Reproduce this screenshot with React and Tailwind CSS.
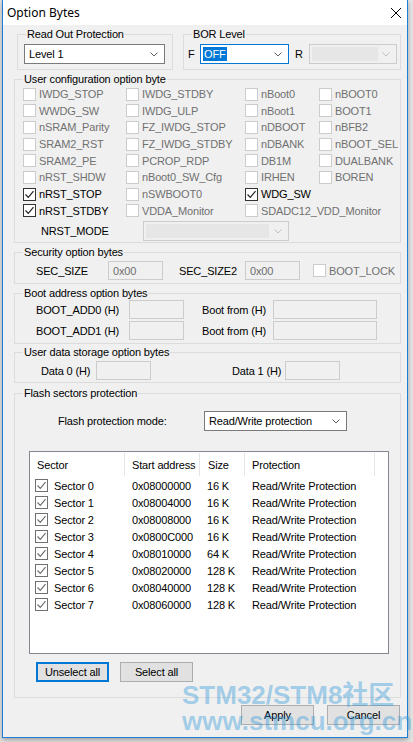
import React from 'react';

const font = "font-['Liberation_Sans',Arial,sans-serif]";

const Chevron = ({ color = '#606060' }) => (
  <svg width="8" height="5" viewBox="0 0 8 5" className="shrink-0">
    <path d="M0.5 0.5 L4 4 L7.5 0.5" fill="none" stroke={color} strokeWidth="1" />
  </svg>
);

const Tick = ({ color }) => (
  <svg width="11" height="11" viewBox="0 0 11 11">
    <path d="M1.5 5.5 L4.3 8.3 L9.5 2.2" fill="none" stroke={color} strokeWidth="1.2" />
  </svg>
);

const Box = ({ checked, disabled, list }) => {
  const tone = disabled
    ? 'border-[#cccccc]'
    : list
    ? 'border-[#707070]'
    : 'border-[#333333]';
  return (
    <span className={`w-[13px] h-[13px] shrink-0 border bg-white flex items-center justify-center ${tone}`}>
      {checked && <Tick color={list ? '#707070' : '#222222'} />}
    </span>
  );
};

const Group = ({ title, className = '', children }) => (
  <fieldset className={`border border-[#dcdcdc] ${className}`}>
    <legend className="ml-[8px] px-[1px] leading-[13px]">{title}</legend>
    {children}
  </fieldset>
);

const Combo = ({ className = '', children }) => (
  <div className={`h-[20px] border border-[#7a7a7a] bg-white flex items-center justify-between pl-[4px] pr-[6px] ${className}`}>
    <span>{children}</span>
    <Chevron />
  </div>
);

const DeadCombo = ({ className = '', inner }) => (
  <div className={`h-[20px] border border-[#cccccc] bg-[#f0f0f0] flex items-center p-[2px] ${className}`}>
    <div className="h-full bg-[#e6e6e6]" style={{ width: inner }} />
    <div className="flex-1 flex justify-center">
      <Chevron color="#bfbfbf" />
    </div>
  </div>
);

const Field = ({ className = '', value }) => (
  <div className={`h-[19px] border border-[#cccccc] bg-[#f0f0f0] pl-[4px] flex items-center text-[#6d6d6d] ${className}`}>
    {value}
  </div>
);

const Button = ({ children, focus, className = '' }) => (
  <div
    className={`w-[73px] h-[20px] bg-[#e1e1e1] flex items-center justify-center ${
      focus ? 'border-2 border-[#0078d7]' : 'border border-[#adadad]'
    } ${className}`}
  >
    {children}
  </div>
);

// each cell: [label, enabled & checked]
const userBits = [
  [['IWDG_STOP'], ['IWDG_STDBY'], ['nBoot0'], ['nBOOT0']],
  [['WWDG_SW'], ['IWDG_ULP'], ['nBoot1'], ['BOOT1']],
  [['nSRAM_Parity'], ['FZ_IWDG_STOP'], ['nDBOOT'], ['nBFB2']],
  [['SRAM2_RST'], ['FZ_IWDG_STDBY'], ['nDBANK'], ['nBOOT_SEL']],
  [['SRAM2_PE'], ['PCROP_RDP'], ['DB1M'], ['DUALBANK']],
  [['nRST_SHDW'], ['nBoot0_SW_Cfg'], ['IRHEN'], ['BOREN']],
  [['nRST_STOP', true], ['nSWBOOT0'], ['WDG_SW', true], null],
  [['nRST_STDBY', true], ['VDDA_Monitor'], ['SDADC12_VDD_Monitor'], null],
];

const sectors = [
  ['Sector 0', '0x08000000', '16 K'],
  ['Sector 1', '0x08004000', '16 K'],
  ['Sector 2', '0x08008000', '16 K'],
  ['Sector 3', '0x0800C000', '16 K'],
  ['Sector 4', '0x08010000', '64 K'],
  ['Sector 5', '0x08020000', '128 K'],
  ['Sector 6', '0x08040000', '128 K'],
  ['Sector 7', '0x08060000', '128 K'],
];

export default function App() {
  return (
    <div className={`w-[413px] h-[742px] bg-[#e4e4e4] overflow-hidden ${font} text-[11px] tracking-[-0.15px] text-black`}>
      <div className="relative ml-[2px] w-[406px] h-[738px] bg-[#f0f0f0] border-x border-b border-[#1c7ed6] shadow-[0_2px_5px_rgba(0,0,0,0.3)] flex flex-col">
        {/* title bar */}
        <div className="h-[25px] shrink-0 bg-white flex items-center justify-between pl-[4px] pr-[6px]">
          <span className="font-['Noto_Sans',sans-serif] text-[12px] tracking-normal">Option Bytes</span>
          <svg width="10" height="10" viewBox="0 0 10 10">
            <path d="M0 0 L10 10 M10 0 L0 10" stroke="#000" strokeWidth="1" />
          </svg>
        </div>

        <div className="flex flex-col pl-[11px] pt-[3px]">
          <div className="flex">
            <Group title="Read Out Protection" className="ml-[3px] w-[156px] pb-[5px]">
              <Combo className="mt-[3px] ml-[6px] w-[141px]">Level 1</Combo>
            </Group>
            <Group title="BOR Level" className="ml-[10px] w-[218px] pb-[5px]">
              <div className="mt-[3px] flex items-center">
                <span className="w-[16px] pl-[4px]">F</span>
                <div className="w-[89px] h-[20px] border border-[#0078d7] bg-white flex items-center justify-between p-[2px] pr-[6px]">
                  <span className="h-full px-[1px] bg-[#0078d7] text-white flex items-center">OFF</span>
                  <Chevron />
                </div>
                <span className="w-[20px] pl-[6px]">R</span>
                <DeadCombo className="w-[88px]" inner="66px" />
              </div>
            </Group>
          </div>

          <Group title="User configuration option byte" className="mt-[3px] w-[387px] pb-[1px]">
            <div className="grid grid-cols-[103px_119px_74px_80px] auto-rows-[16.67px] pl-[8px]">
              {userBits.flat().map((cell, i) =>
                cell ? (
                  <div key={i} className="flex items-center gap-[3px] whitespace-nowrap">
                    <Box checked={cell[1]} disabled={!cell[1]} />
                    <span className={cell[1] ? 'text-black' : 'text-[#707070]'}>{cell[0]}</span>
                  </div>
                ) : (
                  <div key={i} />
                )
              )}
            </div>
            <div className="mt-[2px] flex items-center h-[20px]">
              <span className="pl-[26px] w-[128px]">NRST_MODE</span>
              <DeadCombo className="w-[146px]" inner="123px" />
            </div>
          </Group>

          <Group title="Security option bytes" className="mt-[3px] w-[387px] pb-[3px]">
            <div className="mt-[2px] h-[19px] flex items-center pl-[21px]">
              <span className="w-[72px]">SEC_SIZE</span>
              <Field className="w-[55px]" value="0x00" />
              <span className="ml-[16px] w-[66px]">SEC_SIZE2</span>
              <Field className="w-[55px]" value="0x00" />
              <span className="ml-[13px]"><Box disabled /></span>
              <span className="ml-[3px] text-[#707070]">BOOT_LOCK</span>
            </div>
          </Group>

          <Group title="Boot address option bytes" className="mt-[3px] w-[387px] pb-[3px]">
            {['BOOT_ADD0 (H)', 'BOOT_ADD1 (H)'].map((label, i) => (
              <div key={label} className={`h-[19px] flex items-center pl-[21px] ${i ? 'mt-[2px]' : ''}`}>
                <span className="w-[93px]">{label}</span>
                <Field className="w-[55px]" />
                <span className="ml-[18px] w-[71px]">Boot from (H)</span>
                <Field className="w-[104px]" />
              </div>
            ))}
          </Group>

          <Group title="User data storage option bytes" className="mt-[2px] w-[387px] pb-[2px]">
            <div className="mt-[2px] h-[19px] flex items-center pl-[26px]">
              <span className="w-[55px]">Data 0 (H)</span>
              <Field className="w-[55px]" />
              <span className="ml-[81px] w-[53px]">Data 1 (H)</span>
              <Field className="w-[55px]" />
            </div>
          </Group>

          <Group title="Flash sectors protection" className="mt-[4px] w-[387px] pb-[15px]">
            <div className="mt-[11px] h-[20px] flex items-center pl-[43px]">
              <span className="w-[146px]">Flash protection mode:</span>
              <Combo className="w-[143px]">Read/Write protection</Combo>
            </div>

            <div className="mt-[20px] ml-[14px] w-[360px] h-[203px] border border-[#828790] bg-white">
              <div className="grid grid-cols-[95px_75px_45px_130px] h-[25px]">
                {['Sector', 'Start address', 'Size', 'Protection'].map((h, i) => (
                  <div
                    key={h}
                    className={`flex items-center border-r border-[#e5e5e5] my-[1px] ${i === 2 ? 'pl-[8px]' : 'pl-[7px]'}`}
                  >
                    {h}
                  </div>
                ))}
              </div>
              {sectors.map(([name, addr, size]) => (
                <div key={name} className="grid grid-cols-[95px_75px_45px_130px] h-[17px] items-center">
                  <div className="flex items-center gap-[6px] pl-[5px]">
                    <Box checked list />
                    <span>{name}</span>
                  </div>
                  <span className="pl-[7px]">{addr}</span>
                  <span className="pl-[7px]">{size}</span>
                  <span className="pl-[7px] whitespace-nowrap">Read/Write Protection</span>
                </div>
              ))}
            </div>

            <div className="mt-[8px] flex pl-[21px]">
              <Button focus>Unselect all</Button>
              <Button className="ml-[11px]">Select all</Button>
            </div>
          </Group>

          <div className="mt-[7px] flex pl-[227px]">
            <Button>Apply</Button>
            <Button className="ml-[13px]">Cancel</Button>
          </div>
        </div>

        {/* forum watermark stamped on the capture */}
        <div className="absolute left-[179px] top-[682px] font-['Liberation_Sans','Noto_Sans_CJK_SC',sans-serif] font-bold text-[26px] leading-[26px] tracking-normal text-[rgba(52,152,219,0.42)] whitespace-nowrap pointer-events-none">
          <div>STM32/STM8社区</div>
          <div>www.stmcu.org.cn</div>
        </div>
      </div>
    </div>
  );
}
